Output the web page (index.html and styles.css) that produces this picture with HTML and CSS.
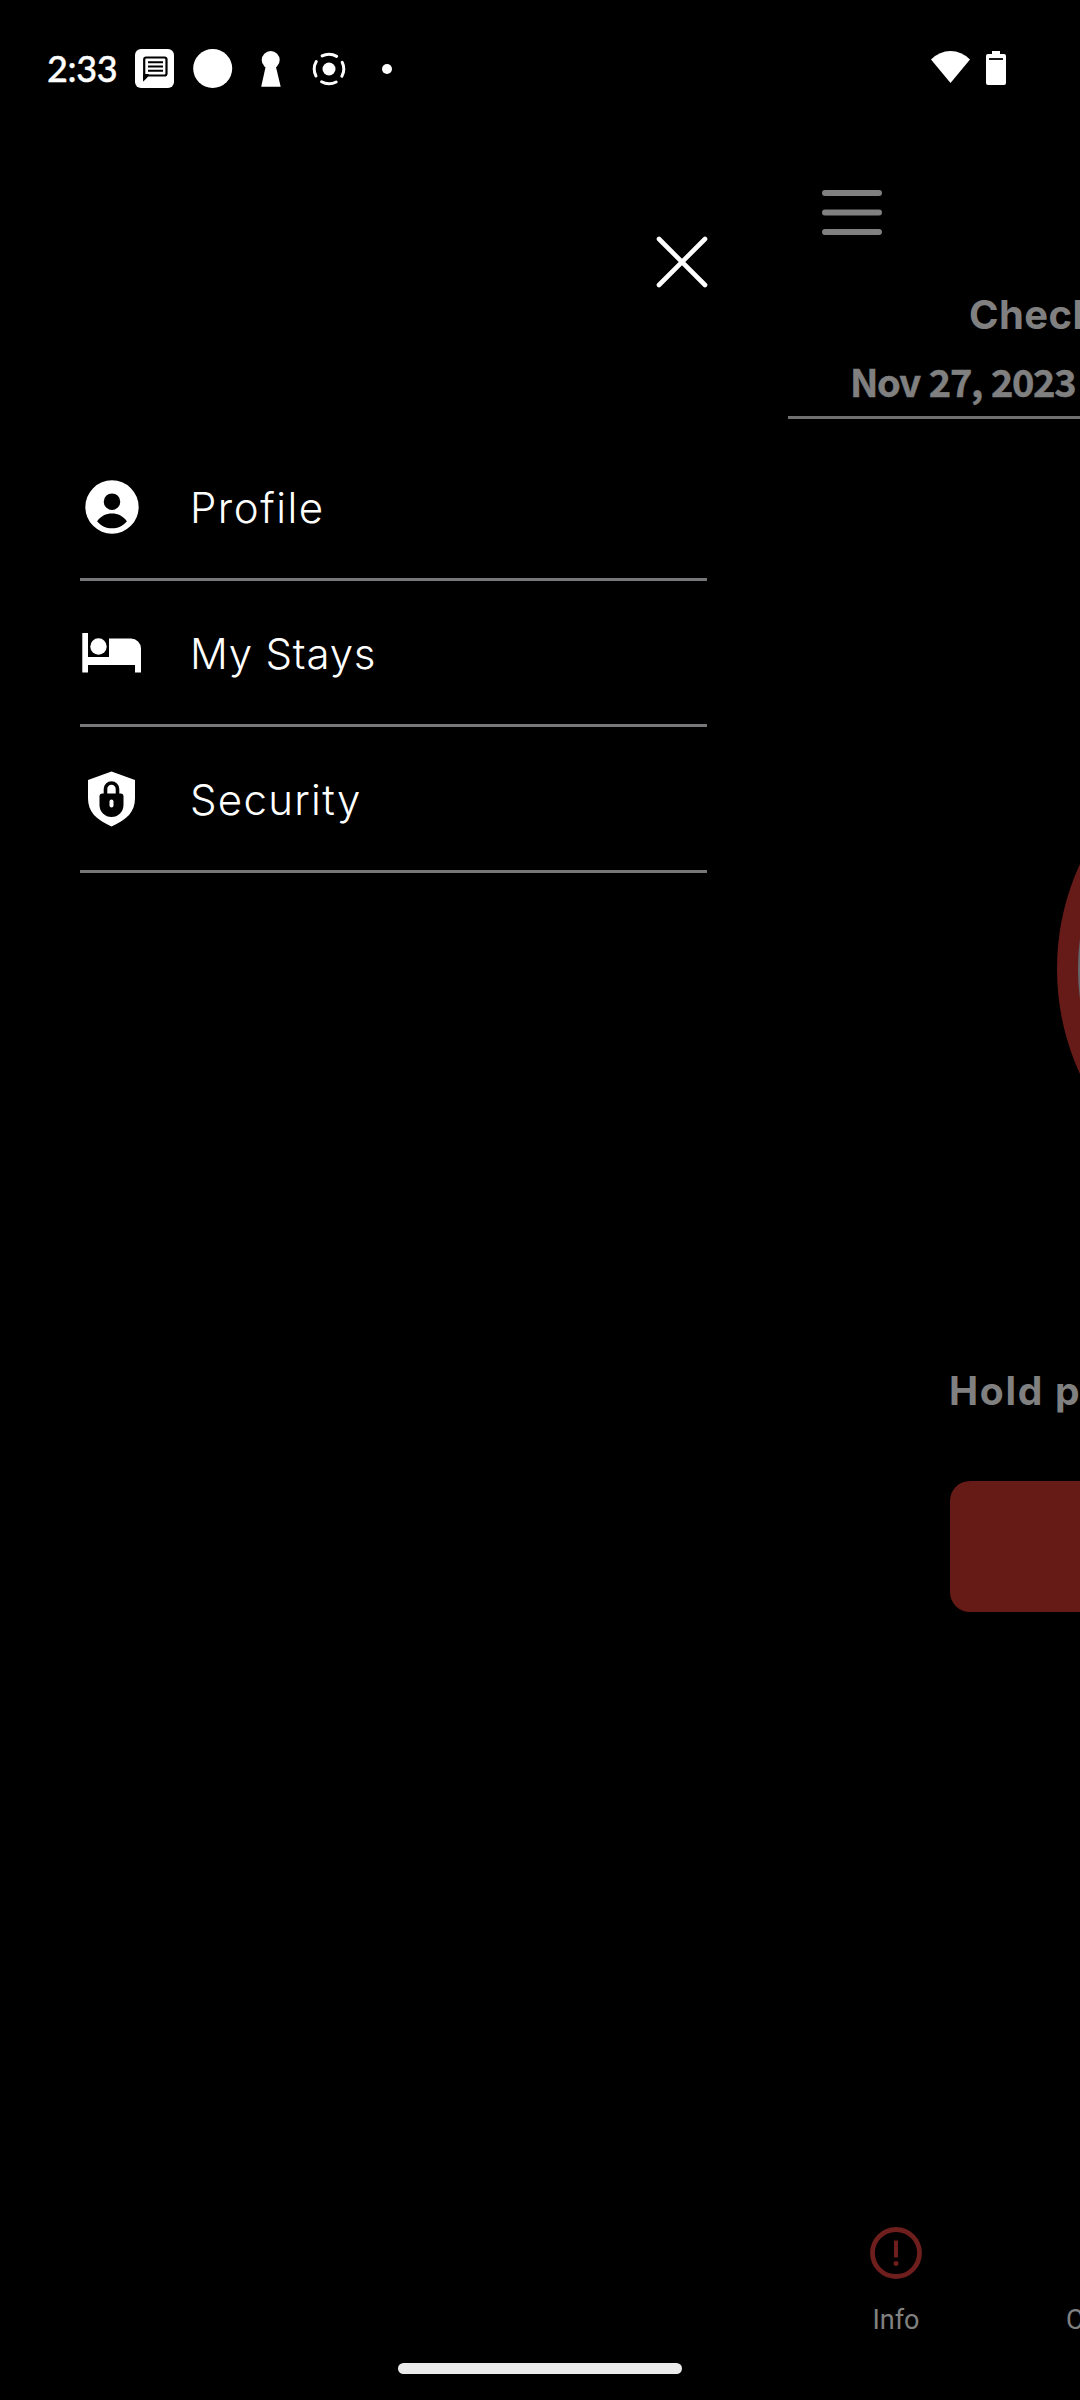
FILE: index.html
```
<!DOCTYPE html>
<html lang="en">
<head>
    <meta charset="UTF-8">
    <meta name="viewport" content="width=device-width, initial-scale=1.0">
    <title>Menu</title>
    <link rel="stylesheet" href="styles.css">
</head>
<body>

    <div class="screen">
        <!-- Status bar -->
        <header class="status-bar">
            <span class="time">2:33</span>
            <svg class="status-icons" width="270" height="40" viewBox="0 0 270 40" fill="#fff">
                <rect x="0" y="0" width="39" height="39" rx="6"/>
                <path d="M9.2 30V10.5a2 2 0 0 1 2-2H29.5a2 2 0 0 1 2 2V24.5a2 2 0 0 1-2 2H12.7z" fill="none" stroke="#000" stroke-width="2.2"/>
                <path d="M8.2 25h6l-6 6.500z" fill="#000"/>
                <path d="M13 13.3h15M13 17.5h15M13 21.700h15" stroke="#000" stroke-width="2"/>
                <circle cx="77.700" cy="19.500" r="19.500"/>
                <circle cx="135.700" cy="11" r="9"/>
                <path d="M131 16h9.500l5.200 21.800h-19.500z"/>
                <circle cx="194" cy="20" r="6.500"/>
                <circle cx="194" cy="20" r="14.800" fill="none" stroke="#fff" stroke-width="3" stroke-linecap="round" stroke-dasharray="15.200 8.048" stroke-dashoffset="7.600"/>
                <circle cx="252" cy="20" r="5"/>
            </svg>
            <svg class="signal-icons" width="78" height="36" viewBox="0 0 78 36" fill="#fff">
                <path d="M0 9.500Q8.500 1 19.500 1T39 9.500L19.500 33z"/>
                <path d="M61 1h8v3h4a2 2 0 0 1 2 2v27a2 2 0 0 1-2 2H57a2 2 0 0 1-2-2V6a2 2 0 0 1 2-2h4z"/>
                <path d="M58 9h14" stroke="#000" stroke-width="1.800"/>
            </svg>
        </header>

        <div class="content">
            <!-- Drawer -->
            <nav class="drawer">
                <button class="close" aria-label="Close">
                    <svg width="52" height="52" viewBox="0 0 52 52" fill="none" stroke="#fff" stroke-width="4.600" stroke-linecap="round">
                        <path d="M3 3L49 49M49 3L3 49"/>
                    </svg>
                </button>
                <ul class="menu">
                    <li class="menu-item">
                        <svg width="64" height="64" viewBox="0 0 24 24" fill="#fff">
                            <path fill-rule="evenodd" d="M12 2a10 10 0 1 0 0 20a10 10 0 0 0 0-20zM12 6.900a3.100 3.100 0 1 1 0 6.200a3.100 3.100 0 0 1 0-6.200zM12 14.400c2.300 0 4 .9 5.600 2.900c-1.600 1.900-3.500 2.700-5.600 2.700s-4-.8-5.600-2.700c1.600-2 3.300-2.900 5.600-2.900z"/>
                        </svg>
                        <span class="label profile">Profile</span>
                    </li>
                    <li class="menu-item">
                        <svg width="64" height="64" viewBox="0 0 64 64" fill="#fff">
                            <path d="M2.300 12H8v24h21V17.500h22a10 10 0 0 1 10 10V51.500h-6V44H8v7.500H2.300z"/>
                            <circle cx="18.500" cy="25.500" r="8.200"/>
                        </svg>
                        <span class="label stays">My Stays</span>
                    </li>
                    <li class="menu-item">
                        <svg width="64" height="64" viewBox="0 0 64 64">
                            <path d="M31.500 4.500L55 13V31c0 14-8 21.500-23.500 28.500C16 52.500 8 45 8 31V13z" fill="#fff"/>
                            <path d="M25.500 28v-6a6 6 0 0 1 12 0v6" fill="none" stroke="#000" stroke-width="3.600"/>
                            <path d="M22.500 26.500h18a3 3 0 0 1 3 3V38a12 12 0 0 1-24 0v-8.500a3 3 0 0 1 3-3z" fill="#000"/>
                            <rect x="29.500" y="32.500" width="4" height="8" rx="2" fill="#fff"/>
                        </svg>
                        <span class="label security">Security</span>
                    </li>
                </ul>
            </nav>

            <!-- Page pushed aside by the drawer -->
            <main class="page">
                <svg class="hamburger" width="60" height="46" viewBox="0 0 60 46" stroke="#808080" stroke-width="6" stroke-linecap="round">
                    <path d="M3 3h54M3 22.500h54M3 42h54"/>
                </svg>
                <div class="check">Check</div>
                <div class="date">Nov 27, 2023</div>
                <div class="ring"></div>
                <div class="hint">Hold p</div>
                <div class="action"></div>
                <div class="tabs">
                    <div class="tab">
                        <svg width="52" height="52" viewBox="0 0 52 52" fill="none" stroke="#6e1e1c">
                            <circle cx="26" cy="26" r="23.500" stroke-width="4.800"/>
                            <path d="M26 13.500v17" stroke-width="4"/>
                            <circle cx="26" cy="36.500" r="2.500" fill="#6e1e1c" stroke="none"/>
                        </svg>
                        <span>Info</span>
                    </div>
                    <span class="tab-next">C</span>
                </div>
            </main>
        </div>

        <div class="home-bar"></div>
    </div>

</body>
</html>
```

FILE: styles.css
```
* {
    margin: 0;
    padding: 0;
    box-sizing: border-box;
}
body {
    background: #000;
    color: #fff;
    font-family: Inter, sans-serif;
}
svg {
    display: block;
    flex-shrink: 0;
}
.screen {
    width: 1080px;
    height: 2400px;
    overflow: hidden;
    display: flex;
    flex-direction: column;
    align-items: center;
}
.status-bar {
    width: 100%;
    height: 136px;
    padding: 49px 71px 0 47px;
    display: flex;
    align-items: flex-start;
}
.time {
    width: 88px;
    font-family: Lato, sans-serif;
    font-size: 36px;
    line-height: 38px;
    font-weight: 500;
    letter-spacing: -0.4px;
    -webkit-text-stroke: 0.4px #fff;
}
.signal-icons {
    margin-left: auto;
    margin-top: 1px;
}
.content {
    width: 100%;
    height: 2227px;
    display: flex;
}
.drawer {
    width: 788px;
    flex-shrink: 0;
    padding: 100px 81px 0 80px;
}
.close {
    display: block;
    margin-left: auto;
    margin-right: -1px;
    border: none;
    background: none;
}
.menu {
    margin-top: 147px;
    list-style: none;
}
.menu-item {
    height: 146px;
    padding-top: 40px;
    display: flex;
    gap: 46px;
    border-bottom: 3px solid #77777a;
}
.label {
    font-size: 42px;
    line-height: 66px;
    font-weight: 300;
    white-space: nowrap;
}
.profile {
    letter-spacing: 1.5px;
}
.stays {
    letter-spacing: 0.8px;
}
.security {
    letter-spacing: 1.3px;
}
.page {
    width: 292px;
    padding-top: 54px;
    overflow: hidden;
    color: #808080;
    white-space: nowrap;
}
.hamburger {
    margin-left: 34px;
}
.check {
    margin: 53px 0 0 181px;
    font-size: 40px;
    line-height: 52px;
    font-weight: 700;
    letter-spacing: 0.4px;
}
.date {
    height: 78px;
    padding: 12px 0 0 62px;
    border-bottom: 3px solid #707070;
    font-family: "Noto Sans CJK SC", sans-serif;
    font-size: 38px;
    line-height: 55px;
    font-weight: 700;
    letter-spacing: -1.4px;
    word-spacing: 2px;
    -webkit-text-stroke: 0.5px #808080;
}
.ring {
    width: 502px;
    height: 502px;
    margin: 299px 0 0 269px;
    border: 21px solid #661b18;
    border-radius: 50%;
    background: #62666a;
}
.hint {
    margin: 145px 0 0 161px;
    font-size: 39px;
    line-height: 52px;
    font-weight: 700;
    letter-spacing: 1.7px;
}
.action {
    width: 400px;
    height: 131px;
    margin: 64px 0 0 162px;
    border-radius: 20px;
    background: #661b16;
}
.tabs {
    margin-top: 615px;
    padding-left: 82px;
    display: flex;
    align-items: flex-end;
    font-family: Roboto, sans-serif;
    font-size: 27px;
    line-height: 32px;
}
.tab {
    width: 52px;
    display: flex;
    flex-direction: column;
    align-items: center;
    gap: 25px;
}
.tab-next {
    margin-left: 144px;
}
.home-bar {
    width: 284px;
    height: 11px;
    border-radius: 6px;
    background: #ebebeb;
}
```
